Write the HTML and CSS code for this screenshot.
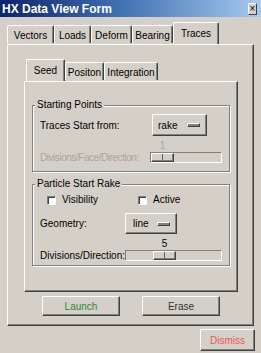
FILE: index.html
```html
<!DOCTYPE html>
<html lang="en">
<head>
  <meta charset="UTF-8">
  <title>HX Data View Form</title>
  <link rel="stylesheet" href="styles.css">
</head>
<body>
  <div class="titlebar">
    <span class="title">HX Data View Form</span>
    <span class="close">×</span>
  </div>

  <div class="tabs outer-tabs">
    <div class="tab tab-vectors">Vectors</div>
    <div class="tab tab-loads">Loads</div>
    <div class="tab tab-deform">Deform</div>
    <div class="tab tab-bearing">Bearing</div>
    <div class="tab tab-traces is-active">Traces</div>
  </div>

  <div class="panel outer-panel">
    <div class="tabs inner-tabs">
      <div class="tab tab-seed is-active">Seed</div>
      <div class="tab tab-positon">Positon</div>
      <div class="tab tab-integration">Integration</div>
    </div>

    <div class="panel inner-panel">
      <div class="group group-start">
        <div class="group-title">Starting Points</div>
        <div class="row row-select">
          <span class="label label-trace">Traces Start from:</span>
          <button class="btn option option-rake"><span>rake</span><span class="indicator"></span></button>
        </div>
        <div class="scale-row is-disabled">
          <span class="label label-face">Divisions/Face/Direction:</span>
          <div class="scale">
            <div class="scale-value" style="margin-left: 1px">1</div>
            <div class="trough trough-face"><div class="thumb" style="margin-left: 0px"></div></div>
          </div>
        </div>
      </div>

      <div class="group group-rake">
        <div class="group-title">Particle Start Rake</div>
        <div class="row row-checks">
          <label class="check check-first"><span class="checkbox"></span>Visibility</label>
          <label class="check"><span class="checkbox"></span>Active</label>
        </div>
        <div class="row row-select row-geometry">
          <span class="label label-geo">Geometry:</span>
          <button class="btn option option-line"><span>line</span><span class="indicator"></span></button>
        </div>
        <div class="scale-row">
          <span class="label label-geo">Divisions/Direction:</span>
          <div class="scale">
            <div class="scale-value" style="margin-left: 28px">5</div>
            <div class="trough trough-dir"><div class="thumb" style="margin-left: 27px"></div></div>
          </div>
        </div>
      </div>
    </div>

    <div class="actions">
      <button class="btn action launch">Launch</button>
      <button class="btn action erase">Erase</button>
    </div>
  </div>

  <div class="footer">
    <button class="btn dismiss">Dismiss</button>
  </div>
</body>
</html>
```

FILE: styles.css
```css
* {
  box-sizing: border-box;
}
body {
  margin: 0;
  width: 261px;
  height: 353px;
  overflow: hidden;
  background: #d4d0c8;
  font-family: "Liberation Sans", Arial, sans-serif;
  font-size: 10px;
  color: #000;
}

/* title bar */
.titlebar {
  height: 17px;
  display: flex;
  align-items: center;
  justify-content: space-between;
  padding: 0 4px 0 2px;
  background: linear-gradient(90deg, #0a246a 0%, #3f6fb0 45%, #a6caf0 100%);
  color: #fff;
  font-weight: bold;
  font-size: 12px;
}
.close {
  width: 9px;
  height: 12px;
  margin-top: 1px;
  background: #d4d0c8;
  border: 1px solid;
  border-color: #fff #404040 #404040 #fff;
  color: #000;
  font-size: 10px;
  font-weight: normal;
  line-height: 9px;
  text-align: center;
}

/* tabs */
.tabs {
  display: flex;
  align-items: flex-end;
  height: 22px;
  margin-bottom: -1px;
  position: relative;
}
.outer-tabs {
  margin: 5px 0 0 7px;
}
.inner-tabs {
  margin: 14px 0 0 18px;
}
.tab {
  height: 18px;
  margin-bottom: 1px;
  padding-top: 2px;
  display: flex;
  align-items: center;
  justify-content: center;
  border: 1px solid;
  border-bottom: 0;
  border-color: #fff #404040 #fff #fff;
  box-shadow: inset -1px 0 #808080;
  border-radius: 2px 2px 0 0;
  background: #d4d0c8;
}
.tab.is-active {
  height: 22px;
  margin-bottom: 0;
  padding-top: 0;
}
.tab-vectors { width: 47px; }
.tab-loads { width: 37px; }
.tab-deform { width: 41px; }
.tab-bearing { width: 41px; }
.tab-traces { width: 46px; }
.tab-seed { width: 39px; }
.tab-positon { width: 39px; }
.tab-integration { width: 54px; }

/* panels */
.panel {
  border: 1px solid;
  border-color: #fff #404040 #404040 #fff;
  box-shadow: inset -1px -1px #808080;
}
.outer-panel {
  margin-left: 7px;
  width: 247px;
  height: 282px;
}
.inner-panel {
  margin-left: 16px;
  width: 214px;
  height: 211px;
  padding: 23px 7px 0;
  display: flex;
  flex-direction: column;
}

/* group boxes */
.group {
  display: flex;
  flex-direction: column;
  border: 1px solid #808080;
  box-shadow: inset 1px 1px #fff, 1px 1px #fff;
}
.group-start {
  padding-bottom: 8px;
}
.group-rake {
  margin-top: 12px;
  padding-bottom: 4px;
}
.group-title {
  align-self: flex-start;
  margin: -7px 0 -5px 2px;
  padding: 0 2px;
  line-height: 12px;
  background: #d4d0c8;
}
.row {
  display: flex;
  align-items: center;
  padding-left: 7px;
}
.row-select {
  margin-top: 8px;
  height: 22px;
}
.row-checks {
  margin-top: 9px;
  padding-left: 14px;
  line-height: 12px;
}
.row-geometry {
  margin-top: 7px;
  height: 21px;
}
.label {
  white-space: nowrap;
}
.label-trace { width: 112px; }
.label-face {
  width: 110px;
  letter-spacing: -0.45px;
}
.label-geo { width: 85px; }

.check {
  display: flex;
  align-items: center;
  gap: 6px;
}
.check-first {
  width: 91px;
}
.checkbox {
  width: 9px;
  height: 9px;
  background: #fff;
  border: 1px solid;
  border-color: #808080 #fff #fff #808080;
  box-shadow: inset 1px 1px #404040;
}

/* scales */
.scale-row {
  display: flex;
  align-items: flex-end;
  padding-left: 7px;
  margin-top: 4px;
}
.scale-row .label {
  line-height: 11px;
}
.is-disabled .label,
.is-disabled .scale-value {
  color: #a8a59e;
}
.scale {
  display: flex;
  flex-direction: column;
}
.scale-value {
  width: 23px;
  text-align: center;
  line-height: 12px;
}
.trough {
  height: 11px;
  border: 1px solid;
  border-color: #808080 #fff #fff #808080;
  display: flex;
}
.trough-face { width: 72px; }
.trough-dir { width: 97px; }
.thumb {
  width: 23px;
  height: 9px;
  border: 1px solid;
  border-color: #fff #404040 #404040 #fff;
  box-shadow: inset -1px -1px #808080;
  background: #d4d0c8 linear-gradient(#606060, #606060) center / 1px 100% no-repeat;
}

/* buttons */
.btn {
  font: inherit;
  color: #000;
  padding: 0;
  background: #d4d0c8;
  border: 1px solid;
  border-color: #fff #404040 #404040 #fff;
  box-shadow: inset -1px -1px #808080;
  display: flex;
  align-items: center;
  justify-content: center;
}
.option {
  justify-content: space-between;
  height: 22px;
  padding: 0 6px 0 5px;
}
.option-rake { width: 55px; }
.option-line {
  width: 52px;
  height: 21px;
  padding-left: 7px;
}
.indicator {
  width: 13px;
  height: 4px;
  border: 1px solid;
  border-color: #fff #404040 #404040 #fff;
  background: #808080;
}
.actions {
  display: flex;
  gap: 22px;
  margin: 4px 0 0 34px;
}
.action {
  width: 78px;
  height: 20px;
}
.launch { color: #2f8a2f; }
.erase { color: #333; }
.footer {
  display: flex;
  justify-content: flex-end;
  padding: 3px 6px 0 0;
}
.dismiss {
  width: 55px;
  height: 22px;
  color: #e8565a;
}
```
